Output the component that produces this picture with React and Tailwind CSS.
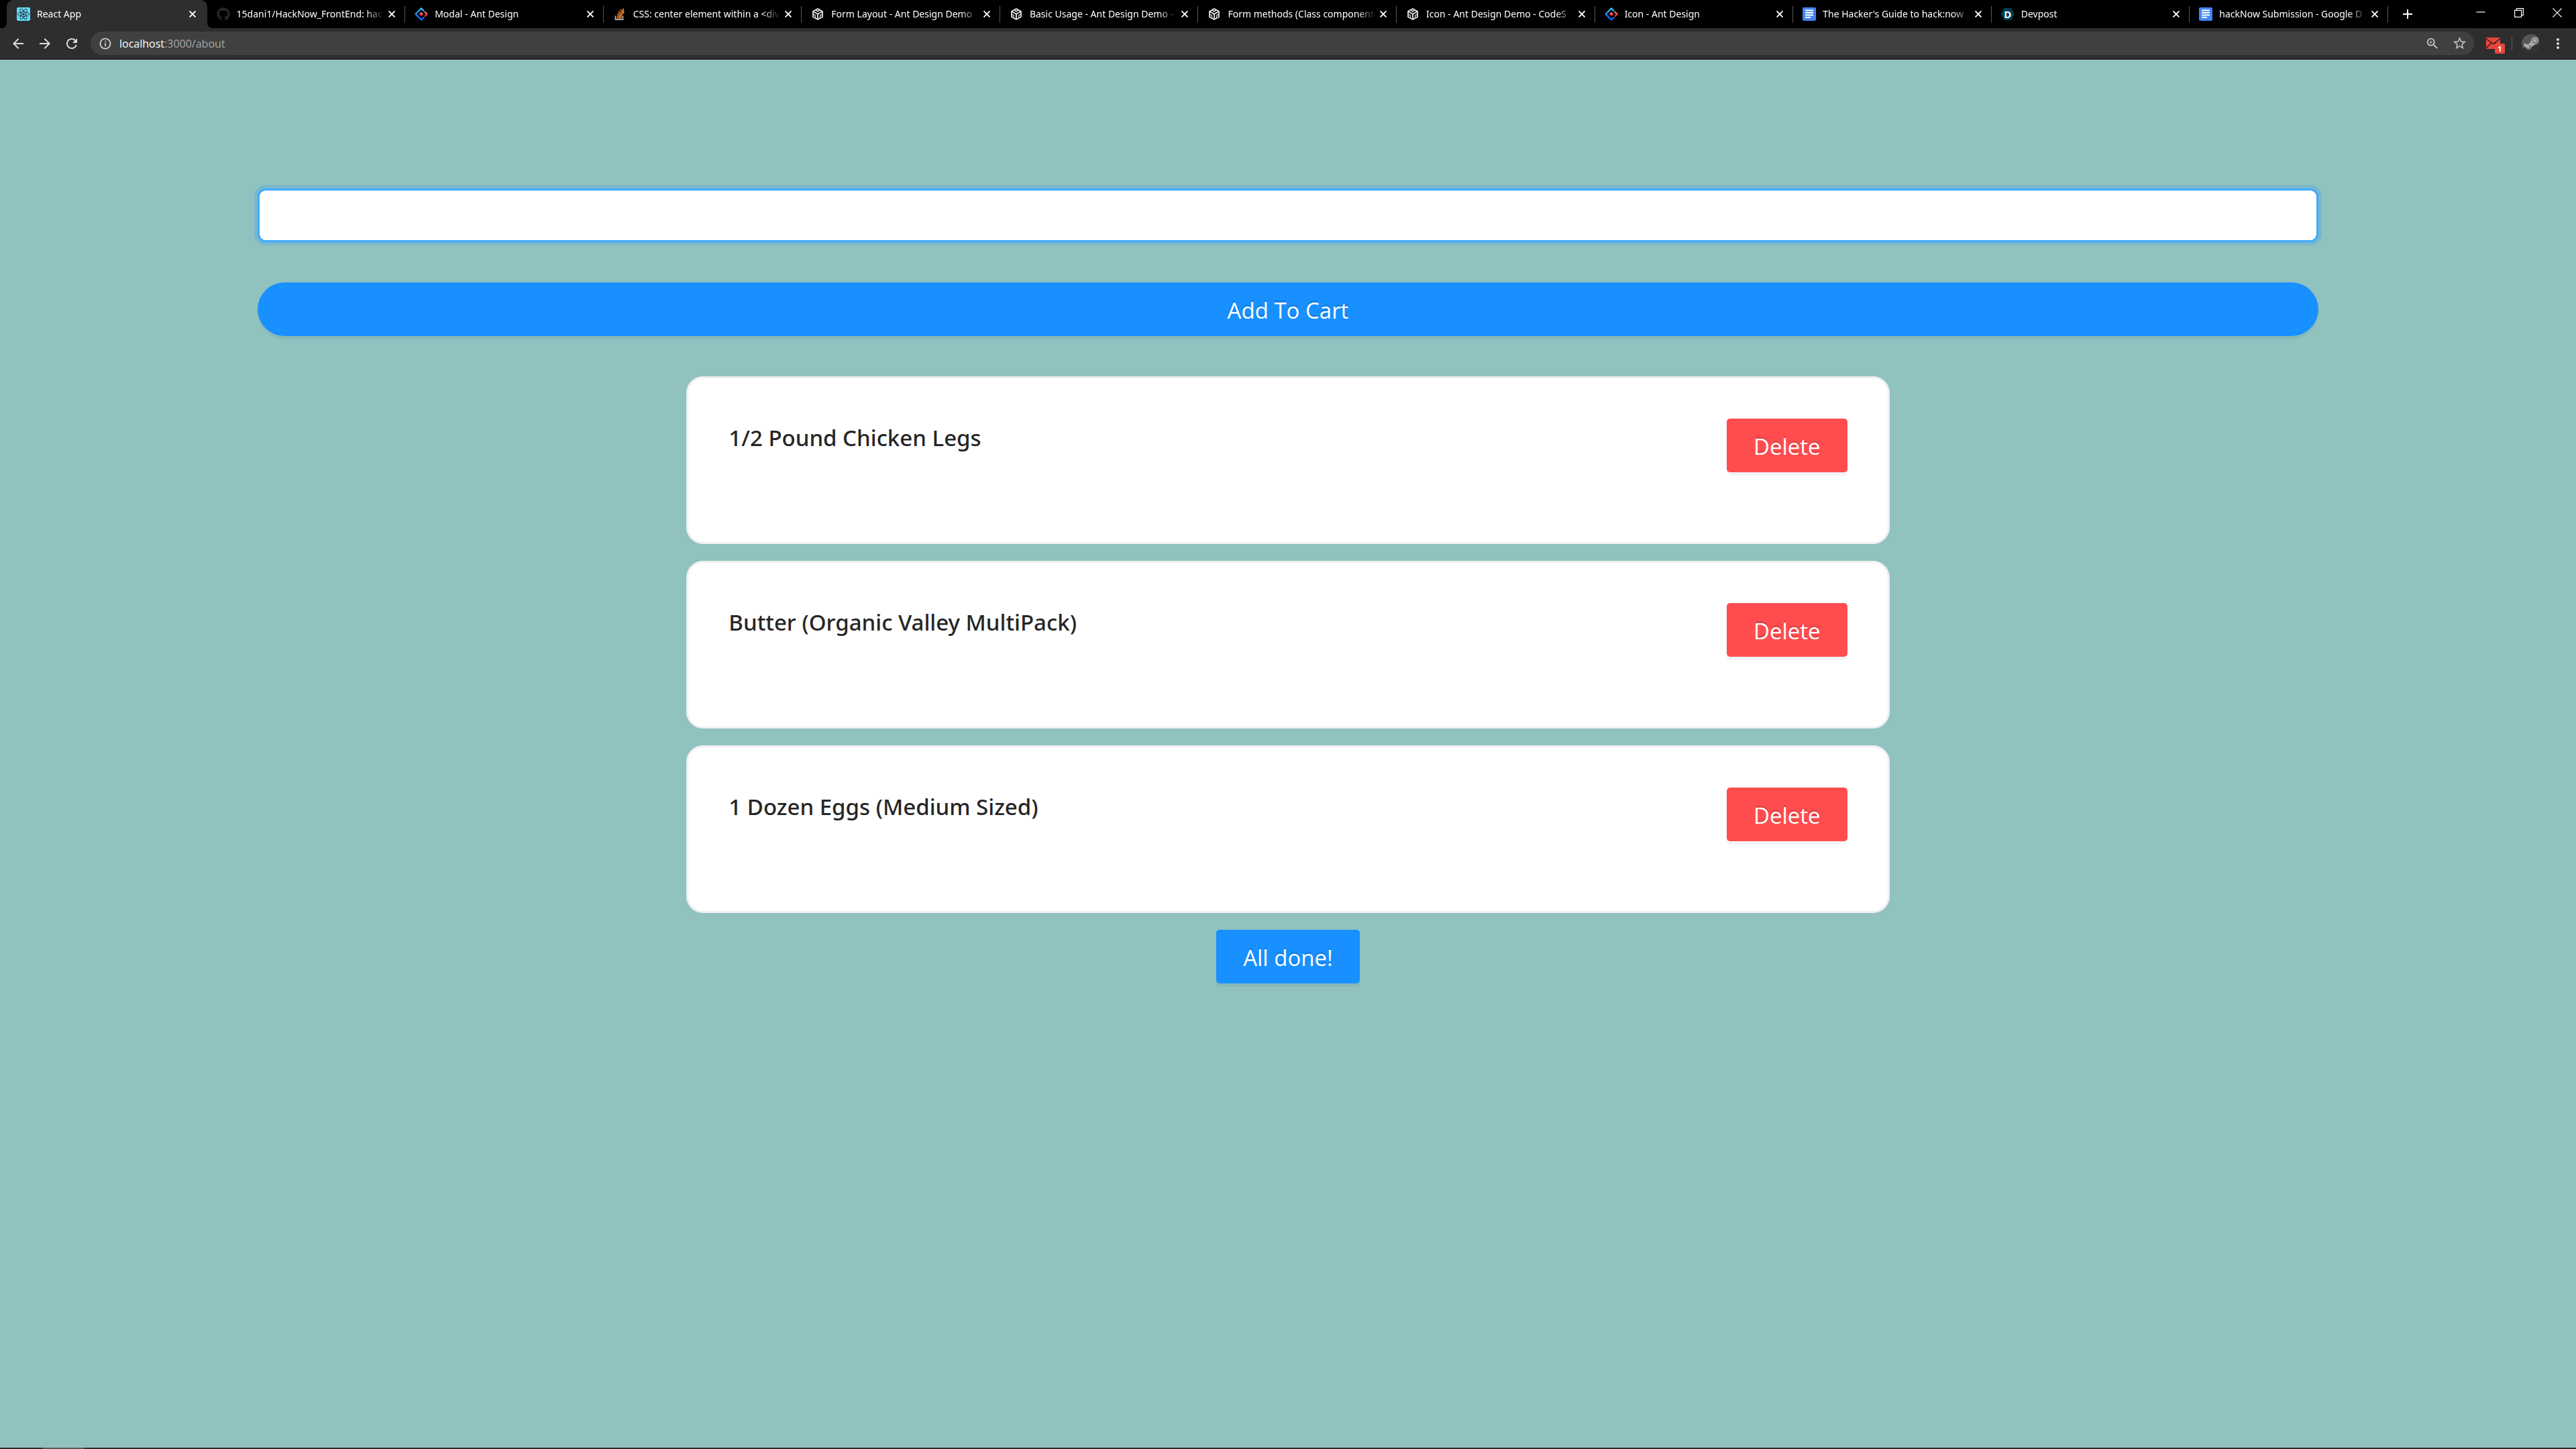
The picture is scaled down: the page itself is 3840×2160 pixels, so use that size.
import React, { useState } from "react";
import {
  MdArrowBack,
  MdArrowForward,
  MdRefresh,
  MdInfoOutline,
  MdZoomIn,
  MdStarBorder,
  MdMoreVert,
} from "react-icons/md";
import { FaGithub, FaSteamSymbol, FaReact } from "react-icons/fa";

function ReactIcon() {
  return (
    <span className="flex size-5 items-center justify-center rounded-xs bg-[#61dafb] text-[#20232a]">
      <FaReact className="size-[18px]" />
    </span>
  );
}

function GithubIcon() {
  return <FaGithub className="size-5 text-[#24292e]" />;
}

function AntIcon() {
  return (
    <svg viewBox="0 0 20 20" className="size-5" fill="none" aria-hidden="true">
      <defs>
        <linearGradient id="antBlue" x1="0" y1="0" x2="0" y2="1">
          <stop offset="0" stopColor="#29cdff" />
          <stop offset="0.45" stopColor="#148eff" />
          <stop offset="1" stopColor="#0a60ff" />
        </linearGradient>
        <linearGradient id="antRed" x1="0" y1="0" x2="0" y2="1">
          <stop offset="0" stopColor="#fa816e" />
          <stop offset="1" stopColor="#f51d2c" />
        </linearGradient>
      </defs>
      <path
        d="M13.4 4.8 10 1.5 1.5 10l8.5 8.5 3.4-3.3"
        stroke="url(#antBlue)"
        strokeWidth="2.4"
        strokeLinecap="round"
        strokeLinejoin="round"
      />
      <path
        d="M15.6 7 18.5 10l-2.9 3"
        stroke="url(#antRed)"
        strokeWidth="2.4"
        strokeLinecap="round"
        strokeLinejoin="round"
      />
      <circle cx="10" cy="10" r="2.5" fill="url(#antRed)" />
    </svg>
  );
}

function StackIcon() {
  return (
    <svg viewBox="0 0 20 20" className="size-5" fill="none" aria-hidden="true">
      <path d="M3.5 12.5v5.6h11v-5.6" stroke="#bcbbbb" strokeWidth="1.6" />
      <g stroke="#f48023" strokeWidth="1.8">
        <path d="M5.4 15.6h7.2" />
        <path d="m5.6 12.6 7.1 1.4" />
        <path d="m6.4 9.4 6.6 3" />
        <path d="m8.2 6.2 5.6 4.6" />
        <path d="m11 3.4 4.3 5.8" />
        <path d="m14.6 1.6 1.2 7" />
      </g>
    </svg>
  );
}

function SandboxIcon() {
  return (
    <svg viewBox="0 0 20 20" className="size-5" fill="none" aria-hidden="true">
      <path
        d="M10 2 17 6v8.2L10 18l-7-3.8V6Z"
        stroke="#e6e6e6"
        strokeWidth="1.8"
        strokeLinejoin="round"
      />
      <path d="M3 6l7 4 7-4M10 10v8" stroke="#e6e6e6" strokeWidth="1.8" />
      <path d="M6.5 3.9 10 6l3.5-2.1" stroke="#e6e6e6" strokeWidth="1.6" />
      <path d="M3.4 10.3 6.4 12v3.8M16.6 10.3 13.6 12v3.8" stroke="#b5b5b5" strokeWidth="1.6" />
    </svg>
  );
}

function DocsIcon() {
  return (
    <svg viewBox="0 0 20 20" className="size-5" aria-hidden="true">
      <rect width="20" height="20" rx="2" fill="#4285f4" />
      <path d="M4 3.500h12v2H4zM4 7h12v2H4zM4 10.500h12v2H4zM4 14h8v2H4z" fill="#fff" />
    </svg>
  );
}

function DevpostIcon() {
  return (
    <span className="flex size-5 items-center justify-center bg-[#003e54] text-[15px] leading-5 font-bold text-white [clip-path:polygon(25%_5%,75%_5%,100%_50%,75%_95%,25%_95%,0_50%)]">
      D
    </span>
  );
}

const TABS = [
  { title: "React App", Icon: ReactIcon, active: true },
  { title: "15dani1/HackNow_FrontEnd: hac", Icon: GithubIcon },
  { title: "Modal - Ant Design", Icon: AntIcon },
  { title: "CSS: center element within a <div", Icon: StackIcon },
  { title: "Form Layout - Ant Design Demo", Icon: SandboxIcon },
  { title: "Basic Usage - Ant Design Demo -", Icon: SandboxIcon },
  { title: "Form methods (Class component", Icon: SandboxIcon },
  { title: "Icon - Ant Design Demo - CodeS", Icon: SandboxIcon },
  { title: "Icon - Ant Design", Icon: AntIcon },
  { title: "The Hacker's Guide to hack:now", Icon: DocsIcon },
  { title: "Devpost", Icon: DevpostIcon },
  { title: "hackNow Submission - Google D", Icon: DocsIcon },
];

function ActiveTabShape() {
  return (
    <span className="absolute inset-y-0 -left-[3px] right-0 rounded-t-[10px] bg-[#2e2e2e]">
      <span className="absolute bottom-0 -left-2 size-2 bg-[radial-gradient(circle_at_top_left,transparent_8px,#2e2e2e_8px)]" />
      <span className="absolute bottom-0 -right-2 size-2 bg-[radial-gradient(circle_at_top_right,transparent_8px,#2e2e2e_8px)]" />
    </span>
  );
}

function Tab({ title, Icon, active }) {
  return (
    <div className={"relative flex min-w-0 flex-1 items-center " + (active ? "pl-3 pr-[2px]" : "pl-[14px]")}>
      {active && <ActiveTabShape />}
      <button
        type="button"
        className="relative flex min-w-0 flex-1 items-center gap-[10px] text-left text-[14px] leading-5 text-white"
      >
        <span className="shrink-0">
          <Icon />
        </span>
        <span className="min-w-0 flex-1 overflow-hidden font-['Noto_Sans',sans-serif] whitespace-nowrap [mask-image:linear-gradient(to_right,black_88%,transparent)]">
          {title}
        </span>
      </button>
      <button
        type="button"
        aria-label={"Close " + title}
        className="relative mr-3 ml-1 flex size-4 shrink-0 items-center justify-center text-white"
      >
        <svg viewBox="0 0 10 10" className="size-[10px]" stroke="currentColor" strokeWidth="1.9">
          <path d="M0.500 0.500l9 9M9.500 0.500l-9 9" />
        </svg>
      </button>
      {!active && <span className="absolute right-0 h-[25px] w-px bg-[#565656]" />}
    </div>
  );
}

function WindowButton({ label, children }) {
  return (
    <button
      type="button"
      aria-label={label}
      className="flex h-[37px] w-[57px] shrink-0 items-center justify-center text-white"
    >
      <svg viewBox="0 0 14 14" className="size-[14px]" fill="none" stroke="currentColor" strokeWidth="1.2">
        {children}
      </svg>
    </button>
  );
}

function TabStrip() {
  return (
    <div className="flex h-[42px] bg-black">
      <div className="flex min-w-0 flex-1 pl-[13px]">
        {TABS.map((tab, i) => (
          <Tab key={i} {...tab} />
        ))}
      </div>
      <button
        type="button"
        aria-label="New tab"
        className="mr-[52px] flex w-[57px] shrink-0 items-center justify-center text-white"
      >
        <svg viewBox="0 0 14 14" className="size-[14px]" stroke="currentColor" strokeWidth="2">
          <path d="M7 0v14M0 7h14" />
        </svg>
      </button>
      <WindowButton label="Minimize">
        <path d="M0.500 6h13" />
      </WindowButton>
      <WindowButton label="Restore">
        <path d="M0.600 3.400h10v10h-10zM3.400 3.400V0.600h10v10h-2.800" />
      </WindowButton>
      <WindowButton label="Close window">
        <path d="M0.500 0.500l13 13M13.500 0.500l-13 13" />
      </WindowButton>
    </div>
  );
}

function NavButton({ label, children }) {
  return (
    <button
      type="button"
      aria-label={label}
      className="flex size-10 shrink-0 items-center justify-center text-[#dcdcdc]"
    >
      {children}
    </button>
  );
}

function Toolbar() {
  return (
    <div className="flex h-[47px] items-center border-b-2 border-[#222222] bg-[#2e2e2e] pr-3 pl-[7px]">
      <NavButton label="Back">
        <MdArrowBack className="size-6" />
      </NavButton>
      <NavButton label="Forward">
        <MdArrowForward className="size-6" />
      </NavButton>
      <NavButton label="Reload">
        <MdRefresh className="size-6" />
      </NavButton>
      <div className="ml-2 flex h-[35px] min-w-0 flex-1 items-center rounded-full bg-[#404040] pr-[2px] pl-3">
        <MdInfoOutline className="size-5 shrink-0 text-[#dcdcdc]" />
        <div className="ml-[11px] flex-1 text-[16px] leading-6 text-[#a8a8a8]">
          <span className="text-white">localhost</span>:3000/about
        </div>
        <button type="button" aria-label="Zoom" className="flex w-10 justify-center text-[#c4c4c4]">
          <MdZoomIn className="size-[22px]" />
        </button>
        <button type="button" aria-label="Bookmark" className="flex w-10 justify-center text-[#c4c4c4]">
          <MdStarBorder className="size-[23px]" />
        </button>
      </div>
      <button type="button" aria-label="Mail, 1 unread" className="relative ml-[18px] size-[21px]">
        <svg viewBox="0 0 21 17" className="w-[21px]" aria-hidden="true">
          <path d="M0 0h21v17H0Z" fill="#e8453c" />
          <path d="M0 1.500 10.500 9.500 21 1.500M0 16l7.500-8M21 16l-7.500-8" fill="none" stroke="#3a1d1c" strokeWidth="1.5" />
        </svg>
        <span className="absolute top-[11px] left-[13px] flex h-[15px] w-[15px] items-center justify-center rounded-xs bg-[#e8453c] text-[11px] leading-3 font-bold text-white">
          1
        </span>
      </button>
      <span className="ml-[17px] h-5 w-px bg-[#5c5c5c]" />
      <button
        type="button"
        aria-label="Profile"
        className="ml-[14px] flex size-7 items-center justify-center overflow-hidden rounded-full bg-[linear-gradient(150deg,#555555_50%,#333333_50%)] text-[#a9a9a9]"
      >
        <FaSteamSymbol className="size-[25px]" />
      </button>
      <button type="button" aria-label="Menu" className="ml-[11px] flex w-[30px] justify-center text-[#e0e0e0]">
        <MdMoreVert className="size-6" />
      </button>
    </div>
  );
}

const BUTTON =
  "h-20 pt-1 text-[33px] leading-[52px] text-white shadow-[0_5px_0_rgba(0,0,0,0.045)] [text-shadow:0_-3px_0_rgba(0,0,0,0.12)]";

function CartPage() {
  const [entry, setEntry] = useState("");
  const [items, setItems] = useState([
    "1/2 Pound Chicken Legs",
    "Butter (Organic Valley MultiPack)",
    "1 Dozen Eggs (Medium Sized)",
  ]);

  const addItem = (e) => {
    e.preventDefault();
    if (entry.trim()) setItems([...items, entry.trim()]);
    setEntry("");
  };

  return (
    <main className="flex flex-1 flex-col items-center bg-[#90c2c0] pt-48 pb-12">
      <form onSubmit={addItem} className="flex w-4/5 flex-col gap-[60px]">
        <input
          type="text"
          aria-label="Item"
          value={entry}
          onChange={(e) => setEntry(e.target.value)}
          className="h-20 w-full rounded-[12px] border-3 border-[#40a9ff] bg-white px-7 text-[33px] text-black/85 shadow-[0_0_0_5px_rgba(24,144,255,0.2)] outline-none"
        />
        <button type="submit" className={BUTTON + " w-full rounded-full bg-[#1890ff]"}>
          Add To Cart
        </button>
      </form>
      <ul className="mt-[60px] flex w-[46.7%] flex-col gap-[25px]">
        {items.map((item, i) => (
          <li
            key={i}
            className="flex min-h-[250px] items-start justify-between rounded-[25px] border-3 border-[#f0f0f0] bg-white px-[60px] pt-[60px]"
          >
            <h2 className="font-['Noto_Sans',sans-serif] text-[33px] leading-[58px] font-medium text-[#262626]">
              {item}
            </h2>
            <button
              type="button"
              onClick={() => setItems(items.filter((_, n) => n !== i))}
              className={BUTTON + " rounded-[5px] bg-[#ff4d4f] px-10"}
            >
              Delete
            </button>
          </li>
        ))}
      </ul>
      <button type="button" className={BUTTON + " mt-[25px] rounded-[5px] bg-[#1890ff] px-10"}>
        All done!
      </button>
    </main>
  );
}

export default function App() {
  return (
    <div className="flex min-h-screen flex-col font-['Open_Sans','Noto_Sans',sans-serif]">
      <header>
        <TabStrip />
        <Toolbar />
      </header>
      <CartPage />
      <footer className="flex h-[2px] bg-[#2d2d2d] pl-16">
        <span className="w-[61px] bg-[#5a5a5a]" />
      </footer>
    </div>
  );
}
